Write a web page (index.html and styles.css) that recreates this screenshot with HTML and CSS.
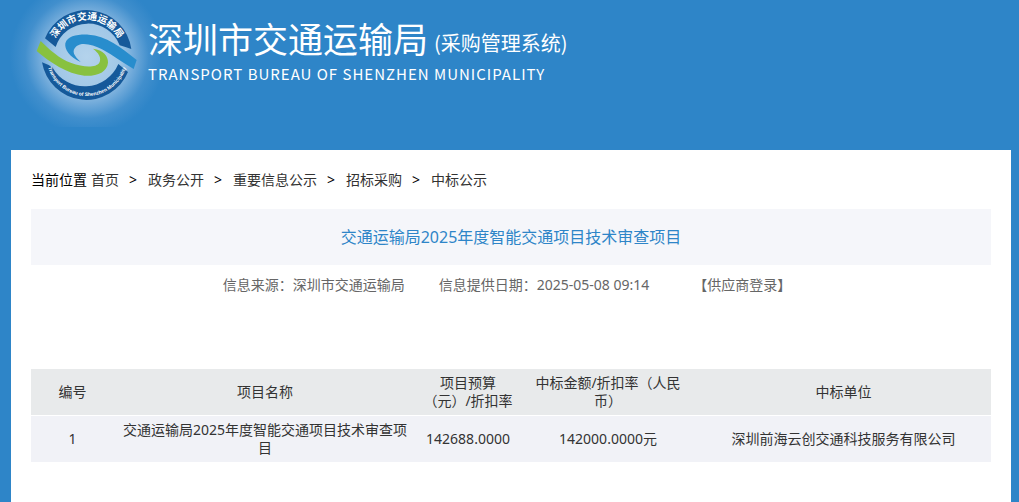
FILE: index.html
```html
<!DOCTYPE html>
<html lang="zh-CN">
<head>
    <meta charset="UTF-8">
    <meta name="viewport" content="width=device-width, initial-scale=1.0">
    <title>深圳市交通运输局采购管理系统</title>
    <link rel="stylesheet" href="styles.css">
</head>
<body>
    <header class="header">
        <svg class="logo" viewBox="0 0 480 381" aria-hidden="true">
            <defs>
                <radialGradient id="glow" gradientUnits="userSpaceOnUse" cx="261" cy="170" r="232">
                    <stop offset="0" stop-color="#b4d3ec"/>
                    <stop offset="0.42" stop-color="#a2c8e7"/>
                    <stop offset="0.6" stop-color="#74acdb"/>
                    <stop offset="0.8" stop-color="#418fcd"/>
                    <stop offset="1" stop-color="#2e85c8"/>
                </radialGradient>
                <path id="arc-top" d="M155 165A106 106 0 0 1 367 165"/>
                <path id="arc-bottom" d="M138 165A123 123 0 0 0 384 165"/>
            </defs>
            <rect width="480" height="381" fill="url(#glow)"/>
            <!-- ring -->
            <path fill="#15599a" d="M135 115A135 135 0 0 1 394 147Q376 141 359 136A102 102 0 0 0 167 141Z"/>
            <path fill="#15599a" d="M126 187Q144 193 158 203A110 110 0 0 0 355 192L384 216A135 135 0 0 1 126 187Z"/>
            <!-- swooshes -->
            <path fill="#288dcd" d="M242 186C208 172 193 147 196 130C203 107 231 103 266 104C316 107 365 142 410 180L401 207C370 190 340 166 306 148C280 134 247 125 230 138C212 153 223 168 242 186Z"/>
            <path fill="#88c140" d="M122 123C149 149 177 176 214 189C249 202 288 204 298 188C306 173 295 158 279 146C310 150 325 168 324 188C321 217 291 229 253 227C201 222 150 187 110 153Z"/>
            <text class="logo-cn"><textPath href="#arc-top" startOffset="50%">深圳市交通运输局</textPath></text>
            <text class="logo-en"><textPath href="#arc-bottom" startOffset="50%">Transport Bureau of Shenzhen Municipality</textPath></text>
        </svg>
        <div class="brand">
            <h1>深圳市交通运输局 <small>(采购管理系统)</small></h1>
            <p>TRANSPORT BUREAU OF SHENZHEN MUNICIPALITY</p>
        </div>
    </header>

    <main class="content">
        <nav class="crumbs">
            <span class="label">当前位置</span>
            <a href="#">首页</a><span class="sep">&gt;</span>
            <a href="#">政务公开</a><span class="sep">&gt;</span>
            <a href="#">重要信息公示</a><span class="sep">&gt;</span>
            <a href="#">招标采购</a><span class="sep">&gt;</span>
            <a href="#">中标公示</a>
        </nav>

        <h2 class="title">交通运输局2025年度智能交通项目技术审查项目</h2>

        <div class="meta">
            <span>信息来源：深圳市交通运输局</span>
            <span>信息提供日期：2025-05-08 09:14</span>
            <a href="#">【供应商登录】</a>
        </div>

        <table class="result">
            <colgroup>
                <col class="col-no">
                <col class="col-name">
                <col class="col-budget">
                <col class="col-amount">
                <col class="col-unit">
            </colgroup>
            <thead>
                <tr>
                    <th>编号</th>
                    <th>项目名称</th>
                    <th>项目预算（元）/折扣率</th>
                    <th>中标金额/折扣率（人民币）</th>
                    <th>中标单位</th>
                </tr>
            </thead>
            <tbody>
                <tr>
                    <td>1</td>
                    <td>交通运输局2025年度智能交通项目技术审查项目</td>
                    <td>142688.0000</td>
                    <td>142000.0000元</td>
                    <td>深圳前海云创交通科技服务有限公司</td>
                </tr>
            </tbody>
        </table>
    </main>
</body>
</html>
```
FILE: styles.css
```css
* {
    box-sizing: border-box;
    margin: 0;
    padding: 0;
}

body {
    display: flex;
    flex-direction: column;
    min-height: 100vh;
    background: #2e85c8;
    font-family: "Noto Sans", "Noto Sans CJK SC", sans-serif;
    font-size: 14px;
    line-height: 18px;
    color: #333;
}

a {
    color: inherit;
    text-decoration: none;
}

/* header */
.header {
    display: flex;
    height: 150px;
    color: #fff;
}

.logo {
    flex: none;
    width: 160px;
    height: 127px;
    margin-right: -12px;
}

.logo-cn,
.logo-en {
    fill: #fff;
    font-weight: bold;
    text-anchor: middle;
}

.logo-cn {
    font-family: "Noto Sans CJK SC", sans-serif;
    font-size: 29px;
}

.logo-en {
    font-family: "Liberation Sans Narrow", "Liberation Sans", sans-serif;
    font-size: 15px;
}

.brand {
    position: relative;
    padding-top: 18px;
}

.brand h1 {
    display: flex;
    align-items: center;
    gap: 6px;
    font-family: "Noto Sans CJK SC", sans-serif;
    font-size: 35px;
    font-weight: normal;
    line-height: 40px;
}

.brand small {
    padding-top: 10px;
    font-size: 20px;
    line-height: 30px;
}

.brand p {
    margin-top: 7px;
    font-family: "Noto Sans CJK SC", sans-serif;
    font-size: 15px;
    letter-spacing: 1px;
}

/* content */
.content {
    flex: 1;
    margin: 0 8px 0 11px;
    padding: 20px 20px 40px;
    background: #fff;
}

.crumbs {
    display: flex;
    flex-wrap: wrap;
    line-height: 20px;
}

.crumbs .label {
    margin-right: 4px;
    color: #000;
}

.crumbs .sep {
    margin: 0 11px 0 10px;
    color: #000;
}

.title {
    margin-top: 19px;
    background: #f5f6fa;
    color: #2e85c8;
    font-size: 16px;
    font-weight: normal;
    line-height: 56px;
    text-align: center;
}

.meta {
    display: flex;
    justify-content: center;
    gap: 34px;
    padding-right: 8px;
    color: #666;
    line-height: 40px;
}

.meta a {
    margin-left: 10px;
}

/* result table */
.result {
    width: 100%;
    margin-top: 64px;
    border-collapse: separate;
    border-spacing: 0;
    table-layout: fixed;
    text-align: center;
}

.result th,
.result td {
    padding: 5px;
    height: 46px;
    font-weight: normal;
}

.result th {
    height: 47px;
    background: #e8eaeb;
    border-bottom: 1px solid #fff;
}

.result td {
    background: #f1f2f7;
}

.col-no {
    width: 83px;
}

.col-name {
    width: 302px;
}

.col-budget {
    width: 104px;
}

.col-amount {
    width: 176px;
}
```
